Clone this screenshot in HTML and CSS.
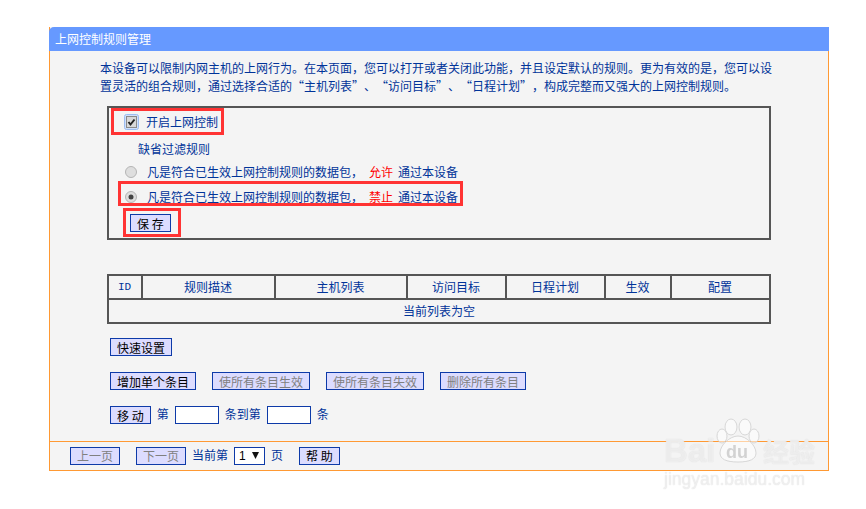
FILE: index.html
```html
<!DOCTYPE html>
<html lang="zh-CN">
<head>
<meta charset="utf-8">
<title>上网控制规则管理</title>
<link rel="stylesheet" href="styles.css">
</head>
<body>
<div class="card">
  <div class="title">上网控制规则管理</div>
  <div class="content">
    <p class="intro">本设备可以限制内网主机的上网行为。在本页面，您可以打开或者关闭此功能，并且设定默认的规则。更为有效的是，您可以设<br>置灵活的组合规则，通过选择合适的“主机列表”、“访问目标”、“日程计划”，构成完整而又强大的上网控制规则。</p>
    <div class="box">
      <div class="row row-enable">
        <svg class="check" width="15" height="16" viewBox="0 0 15 16"><rect x="0.5" y="0.5" width="14" height="15" rx="2" fill="#cfe0fb" stroke="#9dbcf0"/><rect x="2.5" y="2.5" width="10" height="11" fill="#d8d8d8" stroke="#8a8a8a"/><path d="M4.5 8l2 2.5 4-5" fill="none" stroke="#222" stroke-width="2"/></svg>
        <span>开启上网控制</span>
      </div>
      <div class="row row-heading">缺省过滤规则</div>
      <div class="row row-radio row-allow">
        <svg class="radio" width="12" height="12" viewBox="0 0 12 12"><circle cx="6" cy="6" r="5.5" fill="#dedede" stroke="#b4b4b4"/></svg>
        <span>凡是符合已生效上网控制规则的数据包，</span><span class="red">允许</span><span>通过本设备</span>
      </div>
      <div class="row row-radio row-deny">
        <svg class="radio" width="12" height="12" viewBox="0 0 12 12"><circle cx="6" cy="6" r="5.5" fill="#dedede" stroke="#b4b4b4"/><circle cx="6" cy="6" r="2.5" fill="#444"/></svg>
        <span>凡是符合已生效上网控制规则的数据包，</span><span class="red">禁止</span><span>通过本设备</span>
      </div>
      <button class="btn btn-save" type="button">保 存</button>
    </div>
    <table class="rules">
      <colgroup>
        <col class="c-id"><col class="c-desc"><col class="c-host"><col class="c-target"><col class="c-plan"><col class="c-on"><col class="c-cfg">
      </colgroup>
      <tr class="head"><td class="id">ID</td><td>规则描述</td><td>主机列表</td><td>访问目标</td><td>日程计划</td><td>生效</td><td>配置</td></tr>
      <tr><td colspan="7">当前列表为空</td></tr>
    </table>
    <div class="actions">
      <button class="btn" type="button">快速设置</button>
    </div>
    <div class="actions">
      <button class="btn" type="button">增加单个条目</button>
      <button class="btn off" type="button">使所有条目生效</button>
      <button class="btn off" type="button">使所有条目失效</button>
      <button class="btn off" type="button">删除所有条目</button>
    </div>
    <div class="actions move">
      <button class="btn" type="button">移 动</button>
      <span>第</span><input class="num" type="text"><span>条到第</span><input class="num" type="text"><span>条</span>
    </div>
  </div>
  <div class="footer">
    <button class="btn off" type="button">上一页</button>
    <button class="btn off btn-next" type="button">下一页</button>
    <span class="cur">当前第</span>
    <span class="pick"><select class="page"><option>1</option></select><svg class="arrow" width="7" height="7" viewBox="0 0 7 7"><path d="M0 0h7L3.5 7z" fill="#111"/></svg></span>
    <span class="cur">页</span>
    <button class="btn btn-help" type="button">帮 助</button>
  </div>
  <i class="mark mark-a"></i>
  <i class="mark mark-b"></i>
  <i class="mark mark-c"></i>
</div>
<div class="wm">
  <svg class="paw" width="46" height="48" viewBox="0 0 46 48">
    <g fill="#fff" fill-opacity=".55" stroke="#d6d6d6" stroke-width="1">
      <ellipse cx="16" cy="10" rx="6" ry="8"/>
      <ellipse cx="30" cy="10" rx="6" ry="8"/>
      <ellipse cx="7" cy="19" rx="5" ry="7"/>
      <ellipse cx="39" cy="19" rx="5" ry="7"/>
      <path d="M23 19c8 0 18 9 18 17 0 6-6 9-18 9S5 42 5 36c0-8 10-17 18-17z"/>
    </g>
  </svg>
  <span class="wm-bai">Bai</span>
  <span class="wm-du">du</span>
  <span class="wm-cn">经验</span>
  <span class="wm-url">jingyan.baidu.com</span>
</div>
</body>
</html>
```
FILE: styles.css
```css
* { box-sizing: border-box; }
html, body { margin: 0; padding: 0; background: #fff; }
body {
  padding: 27px 0 0 49px;
  font: 12px/18px "Noto Sans CJK SC", "Liberation Sans", sans-serif;
  color: #003399;
  position: relative;
  height: 509px;
  overflow: hidden;
  text-spacing-trim: space-all;
}
.card {
  position: relative;
  width: 780px;
  background: #f4f4f4;
  border: solid #ff9933;
  border-width: 0 1px 1px;
}
.title {
  height: 24px;
  margin: 0 -1px;
  padding-left: 6px;
  background: #6699ff;
  color: #fff;
  line-height: 24px;
  border-top-left-radius: 5px;
}
.content { padding: 8px 0 17px; }
.intro { margin: 0 0 11px 50px; white-space: nowrap; }
.box {
  width: 664px;
  height: 134px;
  margin-left: 57px;
  padding-top: 5px;
  border: 2px solid #555;
}
.row { display: flex; align-items: center; height: 18px; white-space: nowrap; }
.row-enable { margin-left: 15px; }
.check { margin-right: 7px; }
.row-heading { margin: 9px 0 0 29px; }
.row-allow { margin: 5px 0 0 16px; }
.row-deny { margin: 7px 0 0 16px; }
.radio { margin-right: 10px; }
.red { color: #ff0000; margin: 0 5px 0 6px; }
.btn {
  height: 18px;
  margin: 0;
  padding: 0 6px;
  border: 1px solid #0d3aa8;
  border-radius: 0;
  background: #dcdcff;
  color: #000;
  font: inherit;
  line-height: 15px;
  white-space: nowrap;
}
.btn.off { color: #808080; }
.btn-save { display: block; margin: 8px 0 0 21px; }
.rules {
  width: 664px;
  margin: 34px 0 0 57px;
  border-collapse: collapse;
  table-layout: fixed;
  border: 2px solid #555;
}
.rules td {
  height: 24px;
  padding: 0;
  border: 2px solid #555;
  text-align: center;
}
.rules .head td { padding-right: 1px; }
.rules .id { font: 11px/18px "Liberation Mono", monospace; }
.c-id { width: 34px; }
.c-desc { width: 133px; }
.c-host { width: 132px; }
.c-target { width: 99px; }
.c-plan { width: 99px; }
.c-on { width: 66px; }
.c-cfg { width: 99px; }
.actions { display: flex; gap: 16px; margin: 16px 0 0 60px; align-items: center; }
.rules + .actions { margin-top: 14px; }
.move { gap: 6px; line-height: 16px; }
.move span { position: relative; top: -1px; }
.num { width: 44px; height: 18px; border: 1px solid #0d3aa8; background: #fff; padding: 0; }
.footer {
  display: flex;
  align-items: center;
  height: 29px;
  padding: 0 0 1px 20px;
  border-top: 1px solid #ff9933;
  white-space: nowrap;
}
.btn-next { margin-left: 16px; }
.cur { margin-left: 6px; position: relative; top: -1px; }
.pick { position: relative; display: block; margin-left: 6px; height: 18px; }
.page {
  display: block;
  appearance: none;
  width: 31px;
  height: 18px;
  padding: 0 0 0 4px;
  border: 1px solid #0d3aa8;
  border-radius: 0;
  background: #fff;
  color: #000;
  font: 12px "Liberation Sans", sans-serif;
}
.arrow { position: absolute; left: 18px; top: 5px; }
.btn-help { margin-left: 16px; }
.mark { position: absolute; border: 3px solid #ff3333; pointer-events: none; }
.mark-a { left: 61px; top: 81px; width: 113px; height: 27px; }
.mark-b { left: 68px; top: 154px; width: 345px; height: 25px; }
.mark-c { left: 73px; top: 181px; width: 58px; height: 29px; }
.wm { position: absolute; left: 0; top: 0; width: 866px; height: 509px; pointer-events: none; filter: blur(.4px); }
.paw { position: absolute; left: 715px; top: 417px; }
.wm span {
  position: absolute;
  color: rgba(255, 255, 255, .6);
  text-shadow: 0 0 1px #d0d0d0;
  white-space: nowrap;
}
.wm-bai { left: 664px; top: 433px; font: bold 33px/36px "Liberation Sans", sans-serif; }
.wm .wm-du { left: 726px; top: 442px; font: bold 18px/20px "Liberation Sans", sans-serif; color: #d2d2d2; text-shadow: none; }
.wm-cn { left: 763px; top: 435px; font: bold 26px/32px "Noto Sans CJK SC", sans-serif; }
.wm-url { left: 664px; top: 468px; font: 17.5px/22px "Liberation Sans", sans-serif; }
```
